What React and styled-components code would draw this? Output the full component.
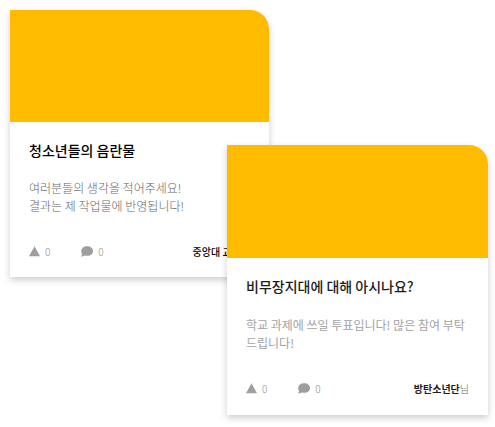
import React from "react";
import styled, { createGlobalStyle } from "styled-components";

const GlobalStyle = createGlobalStyle`
  * { box-sizing: border-box; }
  body {
    margin: 0;
    background: #fff;
    font-family: "Noto Sans CJK KR", sans-serif;
  }
  h2, p { margin: 0; }
`;

const Board = styled.main`
  display: grid;
  grid-template-columns: 217fr 42fr 219fr;
  grid-template-rows: 135px auto auto;
  align-items: start;
  padding: 10px 7px 12px 10px;
`;

const Card = styled.article`
  grid-column: ${(p) => (p.$front ? "2 / 4" : "1 / 3")};
  grid-row: ${(p) => (p.$front ? "2 / 4" : "1 / 3")};
  z-index: ${(p) => (p.$front ? 1 : 0)};
  background: #fff;
  border-top-right-radius: 19px;
  box-shadow: 0 3px 7px rgba(0, 0, 0, 0.2);
  color: ${(p) => (p.$front ? "#1c1c1c" : "#000")};
`;

const Banner = styled.div`
  height: ${(p) => (p.$front ? 113 : 112)}px;
  background: #ffbb00;
  border-top-right-radius: 19px;
`;

const Body = styled.div`
  padding: 18px 19px ${(p) => (p.$front ? 18 : 17)}px;
`;

const Title = styled.h2`
  font-size: 14px;
  line-height: 20px;
  font-weight: 500;
`;

const Description = styled.p`
  margin-top: ${(p) => (p.$front ? 20 : 19)}px;
  font-size: 12px;
  line-height: 18px;
  font-weight: ${(p) => (p.$front ? 400 : 300)};
  color: ${(p) => (p.$front ? "#a3a3a3" : "#666")};
`;

const Footer = styled.footer`
  display: flex;
  align-items: center;
  gap: 31px;
  margin-top: 28px;
  font-size: 10px;
  line-height: 17px;
`;

const Action = styled.button`
  display: flex;
  align-items: center;
  gap: 5px;
  padding: 0;
  border: 0;
  background: none;
  font: inherit;
  font-weight: 300;
  color: #8c8c8c;
  cursor: pointer;
`;

const Icon = styled.svg`
  display: block;
  height: 11px;
  fill: #9e9e9e;
`;

const Author = styled.p`
  margin-left: auto;
  font-weight: 300;
  color: #666;
  white-space: nowrap;
`;

const Name = styled.strong`
  font-weight: ${(p) => (p.$front ? 700 : 500)};
  color: ${(p) => (p.$front ? "#1c1c1c" : "#000")};
`;

function VoteCard({ front, title, lines, author }) {
  return (
    <Card $front={front}>
      <Banner $front={front} />
      <Body $front={front}>
        <Title>{title}</Title>
        <Description $front={front}>
          {lines.map((line, i) => (
            <React.Fragment key={line}>
              {i > 0 && <br />}
              {line}
            </React.Fragment>
          ))}
        </Description>
        <Footer>
          <Action type="button" aria-label="추천 0">
            <Icon width="11" viewBox="0 0 11 11" aria-hidden="true">
              <path d="M5.5 0.3 11 10.3H0Z" />
            </Icon>
            0
          </Action>
          <Action type="button" aria-label="댓글 0">
            <Icon width="12" viewBox="0 0 12 11" aria-hidden="true">
              <path d="M6.2 0.2C9.7 0.2 12 2.3 12 5S9.7 9.8 6.2 9.8C5.2 9.8 4.3 9.7 3.5 9.4 2.6 10 1.4 10.5 0 10.4 0.6 9.7 1 8.8 1 7.9 0.5 7.1 0.2 6.1 0.2 5 0.2 2.3 2.8 0.2 6.2 0.2Z" />
            </Icon>
            0
          </Action>
          <Author>
            <Name $front={front}>{author}</Name>님
          </Author>
        </Footer>
      </Body>
    </Card>
  );
}

export default function App() {
  return (
    <>
      <GlobalStyle />
      <Board>
        <VoteCard
          title="청소년들의 음란물"
          lines={["여러분들의 생각을 적어주세요!", "결과는 제 작업물에 반영됩니다!"]}
          author="중앙대 교수"
        />
        <VoteCard
          front
          title="비무장지대에 대해 아시나요?"
          lines={["학교 과제에 쓰일 투표입니다! 많은 참여 부탁", "드립니다!"]}
          author="방탄소년단"
        />
      </Board>
    </>
  );
}
